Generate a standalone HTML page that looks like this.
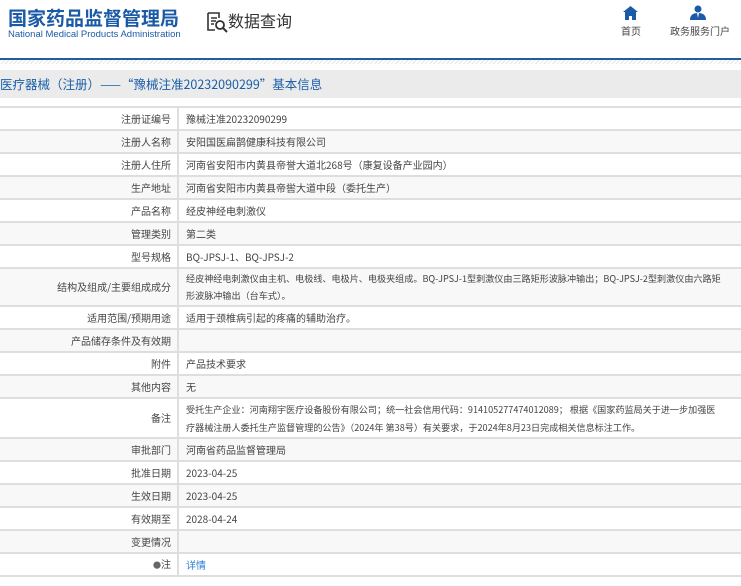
<!DOCTYPE html>
<html><head><meta charset="utf-8"><style>
*{margin:0;padding:0;box-sizing:border-box}
body{width:741px;height:586px;overflow:hidden;background:#fff;font-family:"Liberation Sans","Noto Sans CJK SC",sans-serif;position:relative;color:#333}
.logo{position:absolute;left:8px;top:5px;font-size:19px;line-height:26px;font-weight:bold;color:#1b5aa6;font-family:"Noto Sans CJK SC",sans-serif}
.en{position:absolute;left:8px;top:29px;font-size:9.5px;line-height:12px;color:#1b5aa6}
.dq{position:absolute;top:9px;font-size:16px;line-height:22px;color:#333;font-family:"Noto Sans CJK SC",sans-serif}
.nav{position:absolute;top:24px;font-size:10px;line-height:14px;color:#444;font-family:"Noto Sans CJK SC",sans-serif}
.line{position:absolute;left:0;top:58px;width:741px;height:2px;background:#1e5e9c}
.hatch{position:absolute;left:0;top:60px;width:741px;height:4px;background:repeating-linear-gradient(135deg,#e6e6e6 0 1px,#fff 1px 3px)}
.bar{position:absolute;left:0;top:70px;width:741px;height:28px;background:#ebebeb;color:#1a5fa8;font-size:12.5px;line-height:28px;font-family:"Noto Sans CJK SC",sans-serif}
table{position:absolute;left:-2px;top:106px;width:745px;border-collapse:collapse;table-layout:fixed;font-size:10px;font-family:"Noto Sans CJK SC",sans-serif;color:#444}
td{border:2px solid #dedede;height:23px;line-height:14px;white-space:nowrap;overflow:hidden}
td.l{text-align:right;padding-right:6px}
td.r{padding-left:7px;padding-right:0}
tr:nth-child(even){background:#f8f8f8}
.t{font-size:9.1px}
</style></head><body>
<div class="logo">国家药品监督管理局</div>
<div class="en">National Medical Products Administration</div>
<svg style="position:absolute;left:206px;top:12px" width="22" height="22" viewBox="0 0 22 22"><path d="M2 1h11v5M2 1v17h7M5 6h6M5 9h5M5 12h3" fill="none" stroke="#333" stroke-width="1.6"/><circle cx="14" cy="13" r="4" fill="none" stroke="#333" stroke-width="1.8"/><path d="M17 16l4 4" stroke="#333" stroke-width="2"/></svg>
<div class="dq" style="left:228px">数据查询</div>
<svg style="position:absolute;left:623px;top:6px" width="15" height="14" viewBox="0 0 15 14"><path d="M7.5 0L0 6h2v8h4v-4h3v4h4V6h2z" fill="#1b5aa6"/></svg>
<div class="nav" style="left:621px">首页</div>
<svg style="position:absolute;left:690px;top:5px" width="16" height="15" viewBox="0 0 16 15"><circle cx="8" cy="4" r="3.5" fill="#1b5aa6"/><path d="M0 15c0-5 3-7 8-7s8 2 8 7z" fill="#1b5aa6"/><path d="M7 8h2l-1 5z" fill="#fff"/></svg>
<div class="nav" style="left:670px">政务服务门户</div>
<div class="line"></div><div class="hatch"></div>
<div class="bar">医疗器械（注册）——“豫械注准20232090299”基本信息</div>
<table>
<colgroup><col style="width:179px"><col></colgroup>
<tr><td class="l">注册证编号</td><td class="r">豫械注准20232090299</td></tr>
<tr><td class="l">注册人名称</td><td class="r">安阳国医扁鹊健康科技有限公司</td></tr>
<tr><td class="l">注册人住所</td><td class="r">河南省安阳市内黄县帝誉大道北268号（康复设备产业园内）</td></tr>
<tr><td class="l">生产地址</td><td class="r">河南省安阳市内黄县帝喾大道中段（委托生产）</td></tr>
<tr><td class="l">产品名称</td><td class="r">经皮神经电刺激仪</td></tr>
<tr><td class="l">管理类别</td><td class="r">第二类</td></tr>
<tr><td class="l">型号规格</td><td class="r">BQ-JPSJ-1、BQ-JPSJ-2</td></tr>
<tr><td class="l" style="height:38px">结构及组成/主要组成成分</td><td class="r t" style="line-height:17px">经皮神经电刺激仪由主机、电极线、电极片、电极夹组成。BQ-JPSJ-1型刺激仪由三路矩形波脉冲输出；BQ-JPSJ-2型刺激仪由六路矩<br>形波脉冲输出（台车式）。</td></tr>
<tr><td class="l">适用范围/预期用途</td><td class="r">适用于颈椎病引起的疼痛的辅助治疗。</td></tr>
<tr><td class="l">产品储存条件及有效期</td><td class="r"></td></tr>
<tr><td class="l">附件</td><td class="r">产品技术要求</td></tr>
<tr><td class="l">其他内容</td><td class="r">无</td></tr>
<tr><td class="l" style="height:40px">备注</td><td class="r t" style="line-height:18px">受托生产企业：河南翔宇医疗设备股份有限公司；统一社会信用代码：914105277474012089； 根据《国家药监局关于进一步加强医<br>疗器械注册人委托生产监督管理的公告》（2024年 第38号）有关要求，于2024年8月23日完成相关信息标注工作。</td></tr>
<tr><td class="l">审批部门</td><td class="r">河南省药品监督管理局</td></tr>
<tr><td class="l">批准日期</td><td class="r">2023-04-25</td></tr>
<tr><td class="l">生效日期</td><td class="r">2023-04-25</td></tr>
<tr><td class="l">有效期至</td><td class="r">2028-04-24</td></tr>
<tr><td class="l">变更情况</td><td class="r"></td></tr>
<tr><td class="l" style="background:#fff"><span style="color:#666;font-size:8px">●</span>注</td><td class="r" style="color:#2a7fd4;background:#fff">详情</td></tr>
</table>
</body></html>
